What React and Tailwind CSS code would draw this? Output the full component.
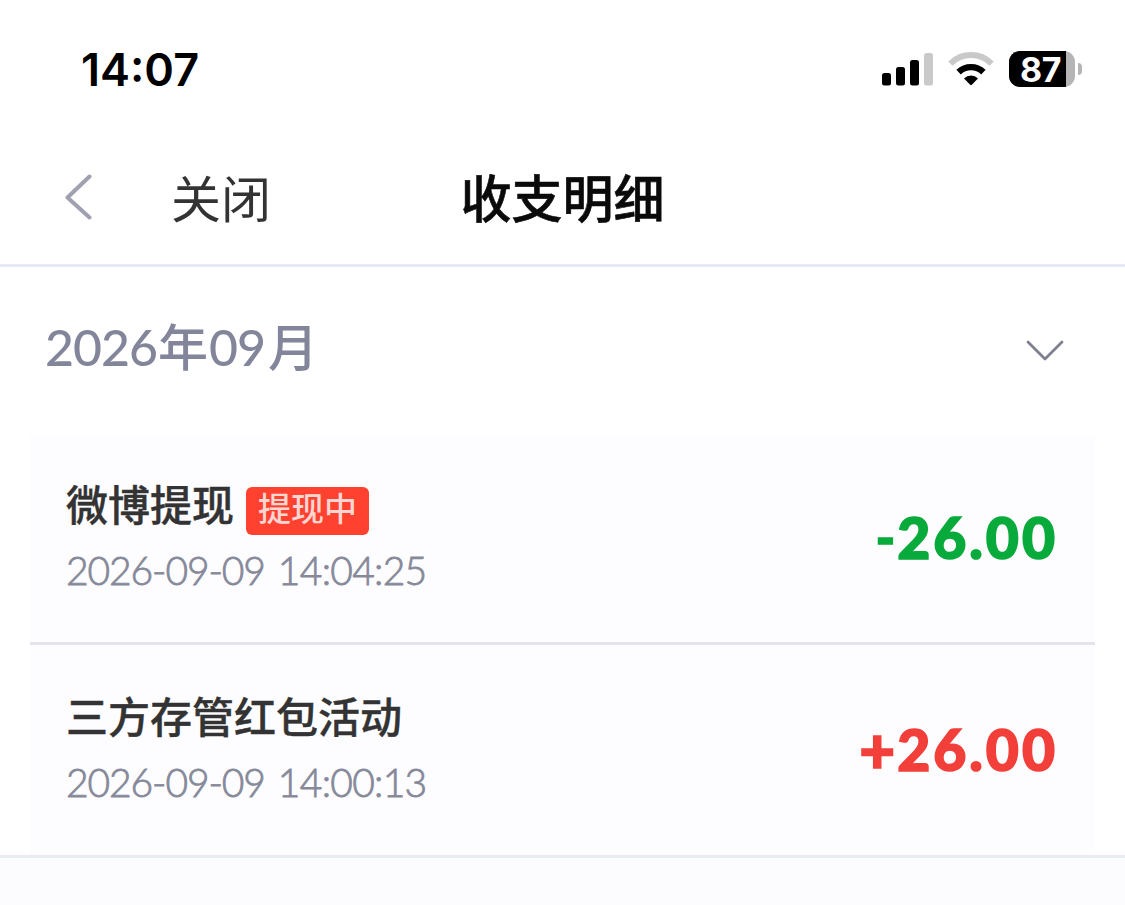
import clsx from 'clsx';

const records = [
  {
    id: 1,
    title: '微博提现',
    status: '提现中',
    date: '2026-09-09',
    time: '14:04:25',
    amount: -26,
  },
  {
    id: 2,
    title: '三方存管红包活动',
    date: '2026-09-09',
    time: '14:00:13',
    amount: 26,
  },
];

const SignalIcon = () => (
  <svg width="52" height="34" viewBox="0 0 52 34">
    <rect x="0" y="21" width="9" height="12.5" rx="2.5" />
    <rect x="14" y="15" width="9" height="18.5" rx="2.5" />
    <rect x="28" y="8" width="9" height="25.5" rx="2.5" />
    <rect x="42" y="1" width="9" height="32.5" rx="2.5" fill="#c9c9c9" />
  </svg>
);

const WifiIcon = () => (
  <svg width="46" height="34" viewBox="0 0 46 34" fill="none">
    <path d="M2.4 11.6A29 29 0 0 1 43.6 11.6" stroke="#c9c9c9" strokeWidth="6" />
    <path d="M10.6 20.1A18 18 0 0 1 35.4 20.1" stroke="#000" strokeWidth="6.4" />
    <path d="M16 26.4A10.2 10.2 0 0 1 30 26.4L23.8 32.8Q23 33.5 22.2 32.8Z" fill="#000" />
  </svg>
);

const Battery = ({ level }) => (
  <div className="flex items-center gap-[3px]">
    <div className="flex h-9 w-[66px] rounded-[11px] bg-[#b5b5b5]">
      <div className="flex w-[57px] items-center justify-center rounded-l-[11px] bg-black pl-[6px] pt-px font-['Inter',sans-serif] text-[34px] font-bold leading-[35px] tracking-[-0.5px] text-white">
        {level}
      </div>
    </div>
    <div className="h-3 w-1 rounded-r-full bg-[#b5b5b5]" />
  </div>
);

const StatusBar = () => (
  <div className="flex h-[130px] items-start justify-between pl-[81px] pr-[43px] pt-[51px]">
    <span className="font-['Inter',sans-serif] text-[45px] font-semibold leading-[37px] text-black">
      14:07
    </span>
    <div className="flex items-center">
      <SignalIcon />
      <div className="ml-[14px] mr-[15px]">
        <WifiIcon />
      </div>
      <Battery level={87} />
    </div>
  </div>
);

const NavBar = () => (
  <div className="grid h-[137px] grid-cols-3 items-center border-b-[3px] border-[#e6eaf5]">
    <div className="flex items-center pl-16">
      <svg width="28" height="46" viewBox="0 0 28 46" fill="none" stroke="#9fa1b0" strokeWidth="4" strokeLinecap="round" strokeLinejoin="round">
        <path d="M25.5 2.5L3.5 23.5L25.5 43.5" />
      </svg>
      <span className="ml-[79px] pt-[3px] text-[50px] leading-[60px] text-[#333]">关闭</span>
    </div>
    <h1 className="pt-1 text-center text-[51px] font-medium leading-[60px] text-[#0a0a0a] [-webkit-text-stroke:0.6px_#0a0a0a]">
      收支明细
    </h1>
  </div>
);

const MonthHeader = () => (
  <div className="flex h-[169px] items-start justify-between pl-[45px] pr-[60px] pt-[50px]">
    <div className="flex text-[50px] font-medium leading-[60px] tracking-[-1px] text-[#83869a]">
      <span>2026</span>
      <span className="ml-px">年</span>
      <span className="ml-0.5">09</span>
      <span className="ml-[3px]">月</span>
    </div>
    <svg className="mt-[22px]" width="40" height="24" viewBox="0 0 40 24" fill="none" stroke="#7e8090" strokeWidth="2.8" strokeLinecap="round" strokeLinejoin="round">
      <path d="M3 3L20 20L37 3" />
    </svg>
  </div>
);

const Amount = ({ value }) => (
  <div
    className={clsx(
      'mt-[27px] flex text-[57px] font-black leading-[60px] tracking-[3px] [-webkit-text-stroke:1.6px_currentColor]',
      value > 0 ? 'text-[#f23f3a]' : 'text-[#08ab3b]'
    )}
  >
    {value > 0 ? (
      <span className="text-[62px] tracking-[2px]">+</span>
    ) : (
      <span className="text-[52px] tracking-[2px]">-</span>
    )}
    <span>{Math.abs(value).toFixed(2)}</span>
  </div>
);

const RecordRow = ({ record }) => (
  <div className="flex h-[209px] items-start justify-between border-b-[3px] border-[#e4e4ee] pl-9 pr-[37px] pt-11 last:h-[210px] last:border-b-0 last:pt-[47px]">
    <div>
      <div className="flex h-[54px] items-start">
        <span className="text-[42px] font-medium leading-[50px] text-[#333] [-webkit-text-stroke:0.4px_#333]">
          {record.title}
        </span>
        {record.status && (
          <span className="ml-3 mt-[7px] h-12 rounded-md bg-[#ff4230] px-3 text-[33px] font-medium leading-[43px] text-[#ffd5d2]">
            {record.status}
          </span>
        )}
      </div>
      <div className="mt-3 flex text-[39px] font-light leading-[48px] text-[#868999] [-webkit-text-stroke:0.8px_#868999]">
        <span className="tracking-[-1.1px]">{record.date}</span>
        <span className="ml-[13px] tracking-[-0.72px]">{record.time}</span>
      </div>
    </div>
    <Amount value={record.amount} />
  </div>
);

const App = () => (
  <div className="flex h-[905px] w-[1125px] flex-col overflow-hidden bg-white font-['Lato','Noto_Sans_CJK_SC',sans-serif]">
    <StatusBar />
    <NavBar />
    <MonthHeader />
    <div className="mx-[30px] bg-[#fdfdff]">
      {records.map((record) => (
        <RecordRow key={record.id} record={record} />
      ))}
    </div>
    <div className="flex-1 border-t-[3px] border-[#e9ebf3] bg-[#fcfcfe]" />
  </div>
);

export default App;
